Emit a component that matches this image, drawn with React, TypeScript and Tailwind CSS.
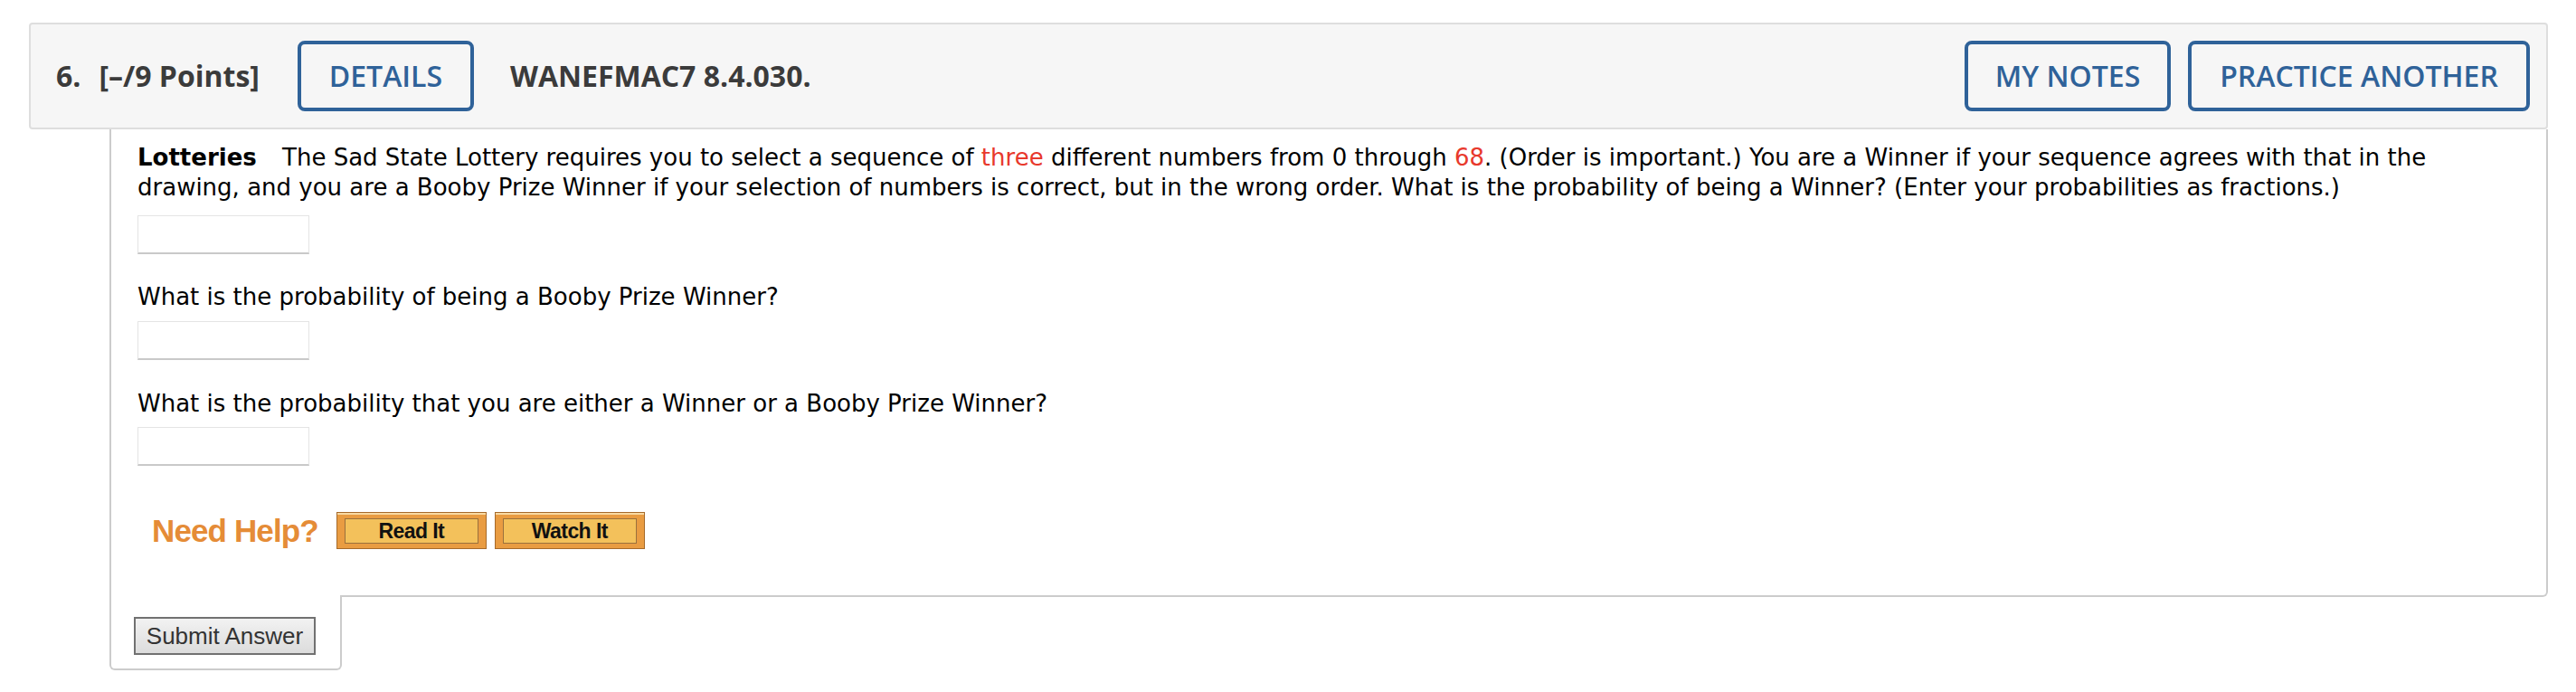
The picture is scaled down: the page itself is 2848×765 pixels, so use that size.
import type { ReactNode } from "react";

const headFont = { fontFamily: '"Open Sans", "Liberation Sans", sans-serif' };
const bodyFont = { fontFamily: '"DejaVu Sans", Verdana, sans-serif' };
const helpFont = { fontFamily: '"Liberation Sans", Arial, sans-serif' };

function OutlineButton({ label, width }: { label: string; width: string }) {
  return (
    <button
      className={`h-[78px] ${width} rounded-[8px] border-[4px] border-[#2f6299] text-[32px] font-semibold text-[#2f6299] leading-none`}
      style={headFont}
    >
      {label}
    </button>
  );
}

function AnswerBox({ className = "" }: { className?: string }) {
  return (
    <input
      type="text"
      className={`block w-[190px] h-[43px] border border-[#e4e4e4] border-b-2 border-b-[#c9c9c9] bg-white outline-none ${className}`}
    />
  );
}

function HelpButton({ children }: { children: ReactNode }) {
  return (
    <div className="flex w-[166px] h-[41px] border border-[#a66a2b] bg-[#e99c42] shadow-[inset_0_2px_0_#f8d9a2] pt-[6px] px-[8px] pb-[5px]">
      <div
        className="flex flex-1 items-center justify-center border border-[#9a713d] bg-[#f3c15b] text-[23px] leading-none font-bold text-[#111] tracking-tight"
        style={helpFont}
      >
        {children}
      </div>
    </div>
  );
}

export default function App() {
  return (
    <div className="min-h-screen bg-white pt-[25px] pl-[32px] pr-[31px]">
      {/* question header */}
      <div
        className="flex items-center h-[118px] rounded-[4px] border-2 border-[#dedede] bg-[#f6f6f6] pl-[28px] pr-[18px] text-[32px] font-bold text-[#3b3b3b]"
        style={headFont}
      >
        <span>6.</span>
        <span className="ml-[20px]">[–/9 Points]</span>
        <div className="ml-[42px]">
          <OutlineButton label="DETAILS" width="w-[195px]" />
        </div>
        <span className="ml-[40px]">WANEFMAC7 8.4.030.</span>
        <div className="ml-auto flex gap-[19px]">
          <OutlineButton label="MY NOTES" width="w-[228px]" />
          <OutlineButton label="PRACTICE ANOTHER" width="w-[378px]" />
        </div>
      </div>

      <div className="ml-[89px]" style={bodyFont}>
        {/* question body */}
        <div className="border-x-2 border-b-2 border-[#cccccc] rounded-br-[6px] pt-[15px] pl-[29px] pr-[60px] pb-[51px] text-[26px] leading-[33px] text-black">
          <p>
            <b className="mr-[20px]">Lotteries</b> The Sad State Lottery requires you to select a
            sequence of <span className="text-[#e8392c]">three</span> different numbers from 0
            through <span className="text-[#e8392c]">68</span>. (Order is important.) You are a
            Winner if your sequence agrees with that in the drawing, and you are a Booby Prize
            Winner if your selection of numbers is correct, but in the wrong order. What is the
            probability of being a Winner? (Enter your probabilities as fractions.)
          </p>
          <AnswerBox className="mt-[14px]" />

          <p className="mt-[31px]">What is the probability of being a Booby Prize Winner?</p>
          <AnswerBox className="mt-[10px]" />

          <p className="mt-[32px]">
            What is the probability that you are either a Winner or a Booby Prize Winner?
          </p>
          <AnswerBox className="mt-[9px]" />

          <div className="mt-[51px] pl-[16px] flex items-center">
            <span className="text-[35px] font-bold text-[#e58c37] tracking-tight" style={helpFont}>
              Need Help?
            </span>
            <div className="ml-[20px] flex gap-[9px]">
              <HelpButton>Read It</HelpButton>
              <HelpButton>Watch It</HelpButton>
            </div>
          </div>
        </div>

        {/* submit tab */}
        <div className="-mt-[2px] w-[257px] h-[83px] rounded-b-[6px] border-x-2 border-b-2 border-[#cccccc] bg-white pl-[25px] pt-[24px]">
          <button
            className="w-[201px] h-[42px] border-2 border-[#717171] bg-gradient-to-b from-[#f2f2f2] to-[#dcdcdc] text-[26px] leading-none text-[#333]"
            style={helpFont}
          >
            Submit Answer
          </button>
        </div>
      </div>
    </div>
  );
}
